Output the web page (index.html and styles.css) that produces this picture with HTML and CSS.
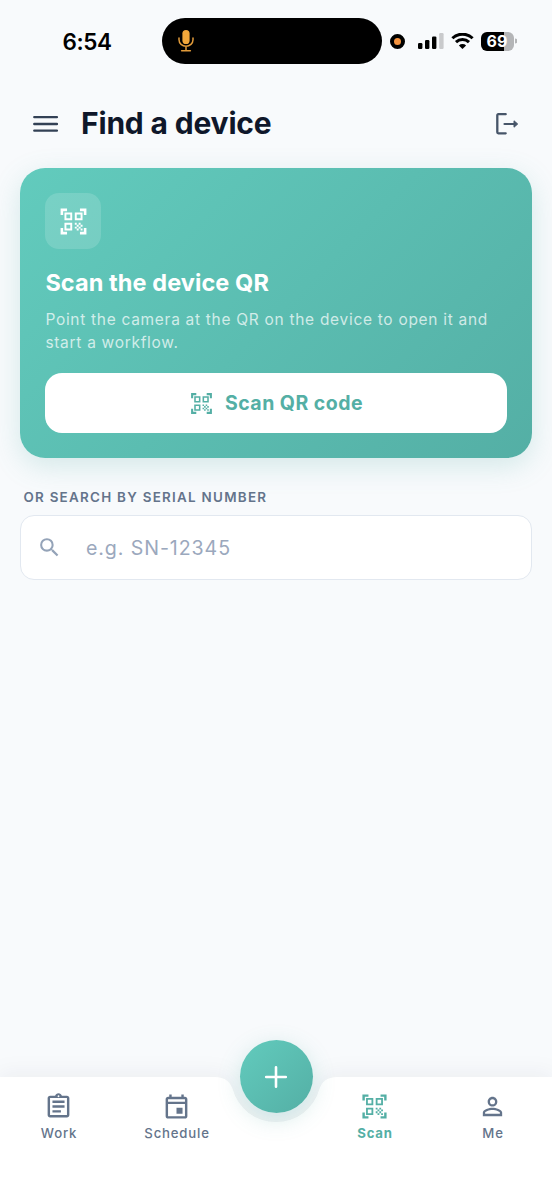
FILE: index.html
```html
<!DOCTYPE html>
<html lang="en">
<head>
<meta charset="utf-8">
<meta name="viewport" content="width=device-width">
<title>Find a device</title>
<link rel="stylesheet" href="styles.css">
</head>
<body>
<svg class="defs" width="0" height="0">
  <symbol id="qr" viewBox="0 0 24 24"><path d="M9.5 6.5v3h-3v-3h3M11 5H5v6h6V5zm-1.5 9.5v3h-3v-3h3M11 13H5v6h6v-6zm6.5-6.5v3h-3v-3h3M19 5h-6v6h6V5zm-6 8h1.5v1.5H13V13zm1.5 1.5H16V16h-1.5v-1.5zM16 13h1.5v1.5H16V13zm-3 3h1.5v1.5H13V16zm1.5 1.5H16V19h-1.5v-1.5zM16 16h1.5v1.5H16V16zm1.5-1.5H19V16h-1.5v-1.5zm0 3H19V19h-1.5v-1.5zM22 7h-2V4h-3V2h5v5zm0 15v-5h-2v3h-3v2h5zM2 22h5v-2H4v-3H2v5zM2 2v5h2V4h3V2H2z"/></symbol>
</svg>
<div class="screen">
  <div class="status">
    <div class="time">6:54</div>
    <div class="island">
      <svg width="16" height="22" viewBox="0 0 16 22"><rect x="4.4" y="0" width="7.2" height="14" rx="3.6" fill="#f2a73b"/><path d="M1 8v1.8a7 6.4 0 0 0 14 0V8M8 16.4v4M3.6 20.8h8.8" fill="none" stroke="#e09a3a" stroke-width="1.5" stroke-linecap="round"/></svg>
    </div>
    <span class="rec"></span>
    <svg class="signal" width="26" height="17" viewBox="0 0 26 17"><rect y="10" width="4.4" height="6" rx="1.2"/><rect x="7" y="7" width="4.4" height="9" rx="1.2"/><rect x="14" y="3.4" width="4.4" height="12.6" rx="1.2"/><rect x="21.2" y="0" width="4.4" height="16" rx="1.2" fill="#c9cacc"/></svg>
    <svg class="wifi" width="23" height="17" viewBox="0 0 23 17"><path d="M1.4 5.3a14.4 14.4 0 0 1 20.2 0M5 9.1a9.3 9.3 0 0 1 13 0" fill="none" stroke="#000" stroke-width="3"/><path d="M11.5 16 7.9 12.4a5.2 5.2 0 0 1 7.2 0z"/></svg>
    <div class="battery"><span>69</span></div>
    <svg class="tip" width="2.5" height="6" viewBox="0 0 3 6"><path d="M0 0a3 3 0 0 1 0 6z" fill="#b4b5b7"/></svg>
  </div>

  <header class="header">
    <svg class="menu" width="26" height="18" viewBox="0 0 26 18"><path d="M1.3 2.1h22.6M1.3 9h22.6M1.3 15.6h22.6" stroke="#334155" stroke-width="2.4" stroke-linecap="round"/></svg>
    <h1>Find a device</h1>
    <svg class="logout" width="24" height="24" viewBox="0 0 24 24"><path d="M10.7 2.2H3.3Q2.3 2.2 2.3 3.2v17.1q0 1 1 1h7.4" fill="none" stroke="#475569" stroke-width="2.3" stroke-linecap="round" stroke-linejoin="round"/><path d="M9.5 12h10" stroke="#475569" stroke-width="2.2" stroke-linecap="round"/><path d="m19 8.8 3.7 3.2-3.7 3.2z" fill="#475569" stroke="#475569" stroke-linejoin="round"/></svg>
  </header>

  <main>
    <section class="card">
      <div class="badge"><svg width="31" height="31"><use href="#qr"/></svg></div>
      <h2>Scan the device QR</h2>
      <p>Point the camera at the QR on the device to open it and<br>start a workflow.</p>
      <div class="scan-btn"><svg width="25" height="25"><use href="#qr"/></svg><span>Scan QR code</span></div>
    </section>
    <div class="label">OR SEARCH BY SERIAL NUMBER</div>
    <div class="search">
      <svg width="25" height="25" viewBox="0 0 24 24"><path d="M15.5 14h-.79l-.28-.27A6.471 6.471 0 0 0 16 9.5 6.5 6.5 0 1 0 9.5 16c1.61 0 3.09-.59 4.23-1.57l.27.28v.79l5 4.99L20.49 19l-4.99-5zm-6 0C7.01 14 5 11.99 5 9.5S7.01 5 9.5 5 14 7.01 14 9.5 11.99 14 9.5 14z"/></svg>
      <span>e.g. SN-12345</span>
    </div>
  </main>

  <nav class="nav">
    <svg class="nav-shape" width="552" height="123" viewBox="0 0 552 123"><path d="M0 0H214C226 0 230 5 232.6 12A45 45 0 0 0 319.4 12C322 5 326 0 338 0H552V123H0Z" fill="#fff"/></svg>
    <div class="fab"><svg width="24" height="24" viewBox="0 0 24 24"><path d="M12 2.2v19.6M2.2 12h19.6" stroke="#fff" stroke-width="2.6" stroke-linecap="round"/></svg></div>
    <div class="item">
      <svg width="29" height="29" viewBox="0 0 24 24"><path d="M7 15h7v2H7zm0-4h10v2H7zm0-4h10v2H7zm12-4h-4.18C14.4 1.84 13.3 1 12 1s-2.4.84-2.82 2H5c-1.1 0-2 .9-2 2v14c0 1.1.9 2 2 2h14c1.1 0 2-.9 2-2V5c0-1.1-.9-2-2-2zm-7-.25c.41 0 .75.34.75.75s-.34.75-.75.75-.75-.34-.75-.75.34-.75.75-.75zM19 19H5V5h14v14z"/></svg>
      <span>Work</span>
    </div>
    <div class="item">
      <svg width="29" height="29" viewBox="0 0 24 24"><path d="M19 4h-1V2h-2v2H8V2H6v2H5c-1.1 0-2 .9-2 2v14c0 1.1.9 2 2 2h14c1.1 0 2-.9 2-2V6c0-1.1-.9-2-2-2zm0 16H5V10h14v10zm0-12H5V6h14v2zm-7 5h5v5h-5z"/></svg>
      <span>Schedule</span>
    </div>
    <div class="item active">
      <svg width="29" height="29"><use href="#qr"/></svg>
      <span>Scan</span>
    </div>
    <div class="item">
      <svg width="29" height="29" viewBox="0 0 24 24"><path d="M12 5.9a2.1 2.1 0 1 1 0 4.2 2.1 2.1 0 0 1 0-4.2m0 9c2.97 0 6.1 1.46 6.1 2.1v1.1H5.9V17c0-.64 3.13-2.1 6.1-2.1M12 4C9.79 4 8 5.79 8 8s1.79 4 4 4 4-1.79 4-4-1.79-4-4-4zm0 9c-2.67 0-8 1.34-8 4v3h16v-3c0-2.66-5.33-4-8-4z"/></svg>
      <span>Me</span>
    </div>
  </nav>
</div>
</body>
</html>
```
FILE: styles.css
```css
* { box-sizing: border-box; }
body {
  margin: 0;
  background: #f8fafc;
  font-family: Inter, "Liberation Sans", sans-serif;
}
svg { display: block; flex: none; }
.defs { position: absolute; }
h1, h2, p { margin: 0; white-space: nowrap; }
.screen {
  width: 552px;
  height: 1200px;
  display: flex;
  flex-direction: column;
  overflow: hidden;
}

.status {
  height: 82px;
  display: flex;
  align-items: center;
  flex: none;
}
.time {
  width: 99.5px;
  margin-left: 62.5px;
  font-size: 22.5px;
  font-weight: 600;
  letter-spacing: -.4px;
  color: #000;
}
.island {
  width: 220px;
  height: 46px;
  border-radius: 23px;
  background: #000;
  display: flex;
  align-items: center;
  padding-left: 16px;
}
.rec {
  width: 15px;
  height: 15px;
  margin-left: 8px;
  border: 4px solid #000;
  border-radius: 50%;
  background: #f5933f;
}
.signal { margin-left: 13px; }
.wifi { margin-left: 7px; }
.battery {
  width: 33px;
  height: 19px;
  margin-left: 6.5px;
  border-radius: 6px;
  background: linear-gradient(90deg, #000 69%, #b4b5b7 69%);
  color: #fff;
  font-size: 16px;
  font-weight: 700;
  line-height: 19px;
  text-align: center;
}
.tip { margin-left: 1px; }

.header {
  height: 86px;
  padding: 0 33.5px 4px 33px;
  display: flex;
  align-items: center;
  flex: none;
}
.header h1 {
  margin-left: 22px;
  font-size: 30px;
  font-weight: 650;
  letter-spacing: -.18px;
  color: #0f172a;
}
.menu { margin-top: 1px; }
.logout { margin: 1px 0 0 auto; }

main { flex: 1; padding: 0 20.4px; }
.card {
  height: 290px;
  padding: 25px;
  border-radius: 25px;
  background: linear-gradient(135deg, #62cbbd, #54afa5);
  box-shadow: 0 8px 28px rgba(84, 175, 165, .22);
}
.badge {
  width: 55.5px;
  height: 56px;
  border-radius: 14px;
  background: rgba(255, 255, 255, .15);
  display: grid;
  place-items: center;
  fill: #fff;
}
.card h2 {
  margin-top: 19px;
  font-size: 23.5px;
  line-height: 30px;
  font-weight: 650;
  letter-spacing: .08px;
  color: #fff;
}
.card p {
  margin-top: 11px;
  font-size: 15.5px;
  line-height: 22.5px;
  letter-spacing: .7px;
  color: rgba(255, 255, 255, .72);
}
.scan-btn {
  height: 60px;
  margin-top: 19px;
  border-radius: 17px;
  background: #fff;
  display: flex;
  align-items: center;
  justify-content: center;
  gap: 11px;
  font-size: 19.5px;
  font-weight: 650;
  letter-spacing: .46px;
  color: #54afa5;
  fill: #54afa5;
}
.label {
  margin: 30px 0 9px 3px;
  font-size: 13.4px;
  line-height: 18px;
  font-weight: 600;
  letter-spacing: 1.28px;
  color: #64748b;
}
.search {
  height: 65px;
  padding-left: 16px;
  border: 1px solid #e2e8f0;
  border-radius: 14px;
  background: #fff;
  display: flex;
  align-items: center;
  gap: 23.5px;
  font-size: 19.6px;
  letter-spacing: .92px;
  color: #9ba8bd;
  fill: #94a3b8;
}

.nav {
  position: relative;
  height: 123px;
  flex: none;
  display: grid;
  grid-template-columns: 118px 118px 80px 118px 118px;
}
.nav-shape {
  position: absolute;
  inset: 0;
  overflow: visible;
  filter: drop-shadow(0 -4px 10px rgba(15, 23, 42, .05));
}
.fab {
  position: absolute;
  left: 239.5px;
  top: -37px;
  width: 73px;
  height: 73px;
  border-radius: 50%;
  background: linear-gradient(135deg, #62cbbd, #54afa5);
  box-shadow: 0 6px 22px rgba(84, 175, 165, .25);
  display: grid;
  place-items: center;
}
.item {
  position: relative;
  padding-top: 14.5px;
  display: flex;
  flex-direction: column;
  align-items: center;
  gap: 4.5px;
  font-size: 13.2px;
  line-height: 17px;
  font-weight: 500;
  letter-spacing: .8px;
  color: #64748b;
  fill: #64748b;
}
.item svg { margin-left: -1px; }
.item.active {
  grid-column: 4;
  font-weight: 700;
  color: #54afa5;
  fill: #54afa5;
}
```
